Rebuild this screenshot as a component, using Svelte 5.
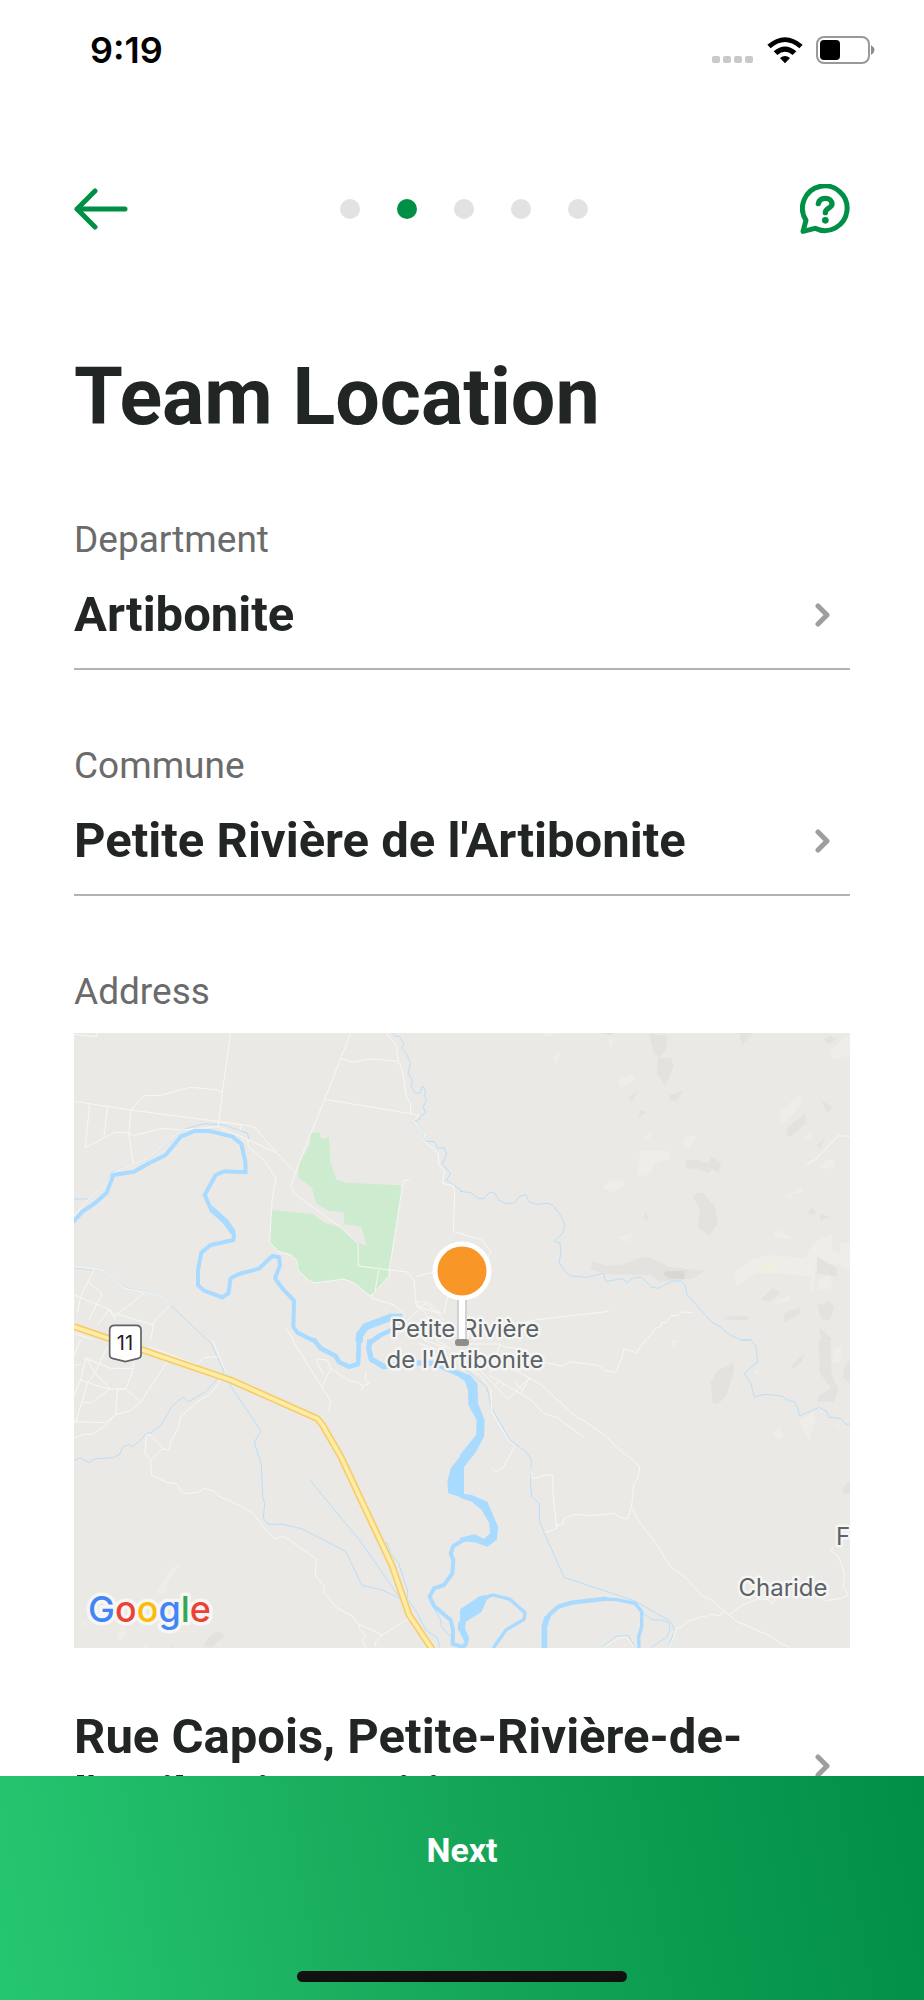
<script>
  export let title = "Team Location";
  export let steps = 5;
  export let currentStep = 1;
  export let fields = [
    { id: "department", label: "Department", value: "Artibonite" },
    { id: "commune", label: "Commune", value: "Petite Rivière de l'Artibonite" }
  ];
  export let address = "Rue Capois, Petite-Rivière-de-l'Artibonite, Haiti";

  // Map tiles, drawn at three units per pixel
  const tiles = [
    {
      x: 0,
      y: -9,
      parks: [
        "M711 309L737 307L741 328L765 321L769 395L787 448L815 458L980 466L985 480L946 720L946 737L905 785L885 795L845 762L810 747L725 759L705 752L668 717L668 690L650 673L612 664L587 636L592 540L715 552L755 580L800 592L852 638L878 647L862 590L811 582L809 546L765 542L727 520L713 472L672 443L675 400L708 345Z"
      ],
      light: [],
      dark: [],
      roads: [
        "M0 14L67 20L68 9M470 9L445 187L433 290",
        "M0 214L170 240L385 268L530 288L545 295L605 365L664 427",
        "M170 240L212 197L260 196L350 172L430 179L445 187M170 240L165 315L178 400",
        "M47 222L34 353L122 307L160 308L178 316L270 295L320 300M101 230L89 325",
        "M0 560L40 510L95 465L120 425L220 388L325 300L430 290L525 330L605 368M498 302L502 288",
        "M522 330L522 350L565 385L606 443L594 512L587 636L612 664L650 675L668 692L672 720L705 752L725 759L810 747L845 762L895 805L960 825L990 850",
        "M830 9L800 85L752 208L708 315L675 400L650 470L660 490L755 560L800 592L852 640L853 708L946 720L1000 726L1020 750L1027 830L1100 850",
        "M800 85L835 97L890 87L973 94M752 208L1010 251L1035 258M935 9L967 45L973 94L985 120L997 200L1010 220L1010 251",
        "M1035 258L1020 272L1052 310L1050 333L1093 370L1095 405L1112 425L1105 460L1138 467L1142 485L1138 605L1170 612",
        "M1007 449L990 452L985 470L946 720L946 737L890 800M914 720L903 785",
        "M1027 740L1060 730L1090 728M1110 850L1120 800M1000 870L1055 820L1110 870M1030 820L1070 870M1060 815L1100 850M1025 815L1060 817",
        "M0 710L60 717L90 722L155 775L260 797L290 825M62 717L42 755L85 792L68 822L45 870M42 755L20 800L10 850M0 795L110 840L120 860L210 790M70 885L105 840L125 870M120 850L240 885M290 825L240 875L230 930M0 910L60 930M635 895L660 930"
      ],
      streams: [
        "M955 9L965 20L975 18L990 42L983 55L997 70L1010 100L1002 130L1015 150L1012 170L1022 188L1038 190L1045 168L1055 182L1050 200L1058 210L1048 230L1055 250L1042 255L1035 270L1022 272L1050 305L1052 333L1080 335L1092 355L1110 352L1118 372L1105 402L1130 430L1118 450L1170 487",
        "M0 507L45 507L95 465L115 425L220 390L330 298L390 281L450 285L520 310L525 328",
        "M0 714L90 722L155 773L260 797L400 930"
      ],
      rivers: [
        { d: "M-6 580L25 545L60 522L98 488L118 435L180 425L225 400L275 375L320 320L365 302L410 304L475 320L502 342L514 395L515 427L450 424L425 435L392 495L410 535L455 575L480 612L478 630L410 645L382 668L372 720L372 765L390 782L445 802L463 790L470 745L495 732L555 716L595 678L615 682L618 705L603 745L625 775L660 812L658 890L670 908L725 935", w: 12 },
        { d: "M410 535L455 575L478 608", w: 18 },
        { d: "M855 938L857 915L875 890L950 862L985 862", w: 22 },
        { d: "M890 936L920 915L985 885", w: 14 }
      ]
    },
    {
      x: 1158,
      y: -9,
      parks: [],
      light: [
        "M252 9L300 9L255 20ZM445 28L468 22L452 55ZM278 85L298 60L303 75L287 102Z",
        "M472 152L518 130L525 150L490 173L475 165ZM552 320L575 305L567 330ZM663 345L680 322L713 315L685 357Z",
        "M540 363L625 363L635 385L585 402L568 433L532 440ZM428 475L450 450L485 448L498 464L462 487Z",
        "M958 245L1018 195L1028 215L980 275L960 277ZM1110 60L1170 10L1170 75L1115 90ZM1028 325L1058 305L1055 335ZM1075 415L1103 388L1125 392L1120 416Z",
        "M980 495L1022 470L1032 488L1000 490L988 510ZM940 610L958 600L1003 627L950 623ZM473 622L520 610L505 637Z",
        "M822 725L870 690L930 675L1035 685L1060 640L1115 610L1118 665L1140 670L1142 640L1170 637L1170 720L1130 700L1065 715L1060 790L1050 770L1055 740L1000 735L960 730L890 730L830 768Z",
        "M1075 750L1110 735L1117 775L1075 780ZM943 815L990 795L990 815L950 823Z"
      ],
      dark: [
        "M430 9L460 9L450 18ZM568 12L622 18L617 62L597 84L580 65ZM594 85L632 84L641 108L617 168L590 128ZM505 200L532 185L517 213ZM630 195L670 182L650 213L628 210ZM540 240L562 245L533 265Z",
        "M838 9L882 10L846 43ZM1090 28L1110 17L1130 28L1107 43ZM1080 208L1115 232L1105 252ZM980 295L1036 250L1037 280L995 318L982 317ZM1070 345L1095 325L1080 355Z",
        "M677 390L715 389L743 400L757 379L783 400L776 430L757 418L743 428L710 415L678 416ZM700 500L712 488L730 489L765 530L773 580L748 617L713 590L720 540ZM550 565L557 545L567 571Z",
        "M398 695L440 708L490 703L545 682L575 684L625 710L733 724L700 745L600 755L570 735L440 733L392 720Z",
        "M787 868L805 858L865 858L865 871ZM903 808L938 775L962 787L925 817ZM972 850L1020 832L1022 850L975 877ZM1040 555L1055 533L1070 548ZM1080 550L1112 562L1080 571ZM1070 825L1110 813L1122 835L1110 870L1085 868ZM1072 680L1130 715L1130 740L1070 730ZM1075 890L1120 930L1085 930Z"
      ],
      roads: [
        "M1040 403L1067 388L1135 317L1170 319",
        "M0 612L62 627L93 665L80 690M130 890L230 869L447 844M558 930L590 893L605 887L605 877L620 877L632 857L652 857L665 846L698 848"
      ],
      streams: [
        "M0 484L32 488L55 505L70 506L90 487L102 487L117 510L137 520L162 520L178 500L197 494L207 515L230 523L265 520L280 527L302 557L315 585L308 610L283 633L300 640L303 670L297 697L315 725L333 738L380 742L430 730L438 755L485 746L503 757L520 744L543 741L575 771L595 775L635 754L662 752L677 768L680 792L755 876L780 890L810 915L845 930L872 930"
      ],
      rivers: []
    },
    {
      x: 0,
      y: 921,
      parks: [],
      light: [
        "M245 755L280 700L310 672L315 680L285 720L270 765ZM125 885L145 860L162 880L140 902ZM15 860L30 840L33 855ZM205 922L215 908L222 922Z"
      ],
      dark: ["M388 922L400 895L430 873L453 885L415 922ZM283 922L295 915L300 922Z"],
      roads: [
        "M0 293L30 283L52 283L95 257L125 224L170 212L200 186L280 66M0 245L95 248L125 224L130 148L155 147L200 186M108 147L155 147L175 95L180 66M0 165L20 120L35 55L110 85L180 85M20 120L80 140L108 147L50 190L30 187M5 250L40 130L65 95L100 20M108 147L60 95L35 50M0 75L20 75M20 0L0 45M228 22L370 75L390 53L430 50",
        "M415 0L455 95L430 135L405 165L370 185L320 230L313 265L290 305L285 330L267 327L230 285L217 285L213 340L230 360L267 327M230 360L233 405L280 428L308 431L327 461L372 457L390 445L415 451L437 470L505 500L540 523L570 563L605 597L628 588L727 657L723 705L750 740L750 757L790 805L833 827L855 853L925 885L1005 835M855 853L855 865L875 885L865 900L875 922M925 885L905 905L902 922",
        "M655 0L770 183L765 215M745 140L770 85L760 60L730 57L728 68L750 105M770 85L825 122L845 125L868 138L887 131L873 120L876 95M868 138L862 152M1035 10L1080 25M1050 0L1120 25M1085 0L1130 25"
      ],
      streams: [
        "M0 362L20 353L45 368L60 357L118 353L137 343L145 322L165 313L175 320L195 305L217 281L230 278L260 257L295 197L328 171L343 186L395 155L450 95",
        "M400 0L412 10L450 95L470 138L561 273L541 306L562 375L566 470L572 490L568 535L582 553L628 553L685 567L815 634L864 736L928 751L985 780",
        "M706 418L860 605L975 770M930 607L940 610L950 640L974 670L1000 750L1000 775L1030 820L1055 870L1090 893L1097 922M1080 805L1100 840L1102 860L1130 890"
      ],
      rivers: [
        { d: "M718 -3L740 25L785 48L795 66L825 80L852 72L855 0", w: 14 },
        { d: "M888 -2L884 25L892 58L930 80L1000 68L1080 70L1170 108", w: 16 },
        { d: "M1172 598L1138 618L1130 640L1138 660L1135 700L1110 735L1080 745L1067 770L1080 798L1130 840L1137 870L1136 912L1172 922", w: 12 }
      ],
      water: ["M1170 335L1130 385L1120 425L1123 460L1170 475Z", "M1170 825L1152 850L1152 870L1170 885Z"]
    },
    {
      x: 1158,
      y: 921,
      parks: [],
      light: [
        "M632 0L658 0L638 22ZM880 97L900 82L892 103ZM1018 240L1062 215L1068 235L1045 303ZM940 280L960 262L972 288L952 298ZM1125 265L1133 248L1140 265ZM1120 30L1145 20L1140 68L1120 70Z"
      ],
      dark: [
        "M752 125L775 90L820 68L822 90L800 165L775 192L758 190ZM995 75L1035 38L1025 65L1000 87ZM1075 0L1110 0L1115 100L1135 150L1122 186L1072 185L1073 170L1112 145L1080 100ZM1170 60L1150 85L1150 115L1170 130ZM1170 422L1148 445L1150 462L1170 462Z"
      ],
      roads: [
        "M0 12L120 12L130 20L200 30M120 12L90 100M558 0L528 38L492 26L487 50L468 97L433 92L418 77L330 65L305 78L255 67",
        "M0 72L60 105L93 150L95 215L145 300L165 318L128 385L107 395L93 380",
        "M50 80L145 178L210 112M90 107L210 178L250 220L290 232L372 292M165 90L240 132L350 232L380 247L440 290L470 322L515 357L540 382L532 418L521 432L515 500L502 537L483 532L463 520L390 527L345 523L310 537L310 550L290 557L288 567L255 578M163 123L175 140L187 148M183 160L208 115M108 133L120 118M122 145L133 130",
        "M213 387L217 416L265 404L279 406L278 450L290 565M515 500L537 545L590 612L615 655L632 680L683 718L723 765L755 781L828 843L935 890L960 910L990 922",
        "M647 867L668 858L688 842L733 828L740 835L748 822L780 827L793 815M808 824L845 795L893 777L925 779L935 790L945 780M1090 778L1097 782L1145 775L1165 765L1150 742L1153 700L1135 648L1115 635L1118 620M647 867L640 895L625 922M430 922L480 893L500 891L523 922"
      ],
      streams: [
        "M0 75L80 140L95 205L150 300L200 337L214 360L212 440L215 470L238 491L238 545L312 712L525 783L630 843L645 870L625 922",
        "M550 820L578 840L607 840L628 850L630 870L620 892L575 922M425 922L470 888L505 887L525 922",
        "M845 0L872 0L888 18L893 65L852 100L873 130L883 171L915 163L965 168L988 183L1003 185L1012 203L1019 228L1078 202L1098 213L1107 232L1143 236L1158 253L1170 252"
      ],
      rivers: [
        { d: "M100 924L138 870L192 838L195 818L150 778L100 765L60 775", w: 10 },
        { d: "M253 924L253 860L267 825L295 800L335 788L440 776", w: 13 },
        { d: "M253 924L253 860L262 830", w: 17 },
        { d: "M430 777L470 779L525 790L545 815L545 860L536 890L537 924", w: 10 }
      ],
      water: [
        "M0 96L30 105L52 130L54 190L74 240L72 290L48 335L0 397L0 345L48 285L50 240L25 195L24 150L14 122L0 115Z",
        "M0 460L35 465L82 485L115 562L110 600L82 620L45 607L0 604L0 593L45 583L72 597L90 580L88 550L65 510L35 485L0 473Z",
        "M0 808L60 768L105 762L80 780L65 815L40 832L18 845L15 865L28 895L20 922L0 922L14 905L0 880Z"
      ]
    }
  ];

  const highway = "M0 881L470 1041L730 1157L745 1175L800 1270L955 1600L1005 1745L1075 1850";
</script>

<div class="screen">
  <div class="status-bar">
    <span class="time">9:19</span>
    <div class="indicators">
      <svg width="42" height="26" viewBox="0 0 42 26" aria-hidden="true">
        {#each [0, 11, 22, 33] as x}
          <rect {x} y="19" width="8" height="7" rx="2" fill="#c9c9c9" />
        {/each}
      </svg>
      <svg class="wifi" width="36" height="27" viewBox="0 0 108 81" aria-hidden="true">
        <path d="M1 23Q54-22 107 23L97 34Q54-4 11 34Z" />
        <path d="M20 43Q54 14 88 43L77 54Q54 34 31 54Z" />
        <path d="M39 63Q54 51 69 63L54 79Z" />
      </svg>
      <svg width="60" height="28" viewBox="0 0 60 28" aria-hidden="true">
        <rect x="1" y="1" width="52" height="26" rx="7" fill="none" stroke="#999999" stroke-width="2" />
        <rect x="4" y="4" width="20" height="20" rx="4" />
        <path d="M55 9Q62 14 55 19Z" fill="#8c8c8c" />
      </svg>
    </div>
  </div>

  <nav class="top-nav">
    <button class="icon-button" aria-label="Back">
      <svg width="54" height="42" viewBox="0 0 54 42">
        <path d="M51 21H3M21 3L3 21L21 39" />
      </svg>
    </button>
    <div class="steps">
      {#each Array(steps) as _, index}
        <span class="step" class:active={index === currentStep}></span>
      {/each}
    </div>
    <button class="icon-button" aria-label="Help">
      <svg width="50" height="50" viewBox="0 0 150 150">
        <path class="bubble" d="M18 109A67 67 0 1 1 45 133L9 142Z" />
        <path class="question" d="M55 59C57 47 65 43 76 43C88 43 96 50 96 60C96 73 76 71 76 86" />
        <circle cx="76" cy="109" r="10" />
      </svg>
    </button>
  </nav>

  <main>
    <h1>{title}</h1>

    {#each fields as field}
      <div class="field">
        <span class="label" id="{field.id}-label">{field.label}</span>
        <button class="value underlined" aria-labelledby="{field.id}-label {field.id}-value">
          <span id="{field.id}-value">{field.value}</span>
          <svg class="chevron" width="16" height="24" viewBox="0 0 16 24">
            <path d="M3 3L12 12L3 21" />
          </svg>
        </button>
      </div>
    {/each}

    <div class="address">
      <span class="label" id="address-label">Address</span>
      <svg class="map" viewBox="0 0 776 615" role="img" aria-label="Map of Petite Rivière de l'Artibonite">
        <g transform="scale(0.33333)">
          {#each tiles as tile}
            <g transform="translate({tile.x} {tile.y})">
              {#each tile.light as d}<path class="light" {d} />{/each}
              {#each tile.dark as d}<path class="dark" {d} />{/each}
              {#each tile.parks as d}<path class="park" {d} />{/each}
              {#each tile.streams as d}<path class="stream" {d} />{/each}
              {#each tile.roads as d}<path class="road" {d} />{/each}
              {#each tile.rivers as river}<path class="river" d={river.d} stroke-width={river.w} />{/each}
              {#each tile.water ?? [] as d}<path class="water" {d} />{/each}
            </g>
          {/each}
          <path class="valley" d="M1775 715L1833 714L1830 739L1785 736L1768 724Z" />
          <path class="peak" d="M2058 702L2085 687L2115 700L2098 713L2065 712Z" />
          <path class="highway" d={highway} />
          <path class="highway-core" d={highway} />
          <path class="shield" d="M122 877H187Q201 877 201 891V966Q201 974 193 976L154 986L115 976Q107 974 107 966V891Q107 877 122 877Z" />
        </g>

        <text class="route" x="51" y="317">11</text>
        <text class="place" x="391" y="304">Petite Rivière</text>
        <text class="place" x="391" y="335">de l'Artibonite</text>
        <text class="place" x="709" y="563">Charide</text>
        <text class="place start" x="762" y="512">F</text>
        <text class="google" x="14" y="589"><tspan fill="#4285f4">G</tspan><tspan fill="#ea4335">o</tspan><tspan fill="#fbbc05">o</tspan><tspan fill="#4285f4">g</tspan><tspan fill="#34a853">l</tspan><tspan fill="#ea4335">e</tspan></text>

        <rect x="383" y="262" width="10" height="44" fill="#d2d2d2" />
        <rect x="385" y="262" width="6" height="44" fill="#ffffff" />
        <rect x="381" y="306" width="14" height="7" rx="3" fill="#8e8e8c" />
        <circle cx="388" cy="238" r="27" fill="#f89728" stroke="#ffffff" stroke-width="5" />
      </svg>
      <button class="value" aria-labelledby="address-label address-value">
        <span id="address-value">{address}</span>
        <svg class="chevron" width="16" height="24" viewBox="0 0 16 24">
          <path d="M3 3L12 12L3 21" />
        </svg>
      </button>
    </div>
  </main>

  <footer>
    <button class="next">Next</button>
    <div class="home-indicator"></div>
  </footer>
</div>

<style>
  :global(body) {
    background: #ffffff;
  }

  .screen {
    min-height: 100vh;
    box-sizing: border-box;
    padding-bottom: 160px;
    font-family: Roboto, sans-serif;
    color: #212624;
  }

  button {
    padding: 0;
    border: 0;
    background: none;
    color: inherit;
    font-family: inherit;
    cursor: pointer;
  }

  .status-bar {
    display: flex;
    justify-content: space-between;
    align-items: center;
    height: 100px;
    padding: 0 48px 0 90px;
    color: #000000;
  }

  .time {
    font-family: Inter, sans-serif;
    font-size: 36px;
    font-weight: 600;
  }

  .indicators {
    display: flex;
    align-items: center;
    gap: 13px;
  }

  /* Navigation */
  .top-nav {
    display: flex;
    justify-content: space-between;
    align-items: center;
    padding: 84px 74px 0;
  }

  .icon-button {
    display: flex;
  }

  .icon-button path {
    fill: none;
    stroke: #009045;
    stroke-width: 5;
    stroke-linecap: round;
    stroke-linejoin: round;
  }

  .icon-button .bubble {
    stroke-width: 15;
  }

  .icon-button .question {
    stroke-width: 16;
  }

  .icon-button circle {
    fill: #009045;
  }

  .steps {
    display: flex;
    gap: 37px;
  }

  .step {
    width: 20px;
    height: 20px;
    border-radius: 50%;
    background: #e2e2e2;
  }

  .step.active {
    background: #009045;
  }

  /* Form */
  main {
    padding: 115px 74px 0;
  }

  h1 {
    margin: 0 0 73px;
    font-size: 79px;
    line-height: 96px;
    font-weight: 700;
  }

  .field {
    margin-bottom: 74px;
  }

  .label {
    display: block;
    font-size: 37px;
    line-height: 44px;
    color: #6b6b6b;
  }

  .value {
    display: flex;
    justify-content: space-between;
    align-items: center;
    gap: 48px;
    width: 100%;
    padding-right: 19px;
    font-size: 49px;
    line-height: 58px;
    font-weight: 700;
    text-align: left;
  }

  .underlined {
    margin-top: 24px;
    padding-bottom: 24px;
    border-bottom: 2px solid #b3b3b3;
  }

  .chevron {
    flex: none;
  }

  .chevron path {
    fill: none;
    stroke: #9e9e9e;
    stroke-width: 5;
    stroke-linecap: round;
    stroke-linejoin: round;
  }

  /* Map */
  .map {
    display: block;
    width: 100%;
    height: auto;
    margin: 19px 0 60px;
    background: #eae9e5;
  }

  .light {
    fill: #eeede8;
  }

  .dark {
    fill: #e3e2de;
  }

  .valley {
    fill: #d8d7d3;
  }

  .peak {
    fill: #f2efe0;
  }

  .park {
    fill: #cdebcf;
  }

  .water {
    fill: #a9daff;
  }

  .stream,
  .road,
  .river,
  .highway,
  .highway-core {
    fill: none;
    stroke-linejoin: round;
  }

  .stream {
    stroke: #b8defa;
    stroke-width: 3;
  }

  .road {
    stroke: #f7f7f5;
    stroke-width: 3;
  }

  .river {
    stroke: #a9daff;
  }

  .highway {
    stroke: #f6cd6c;
    stroke-width: 21;
  }

  .highway-core {
    stroke: #ffeda6;
    stroke-width: 11;
  }

  .shield {
    fill: #ffffff;
    stroke: #5f6266;
    stroke-width: 5;
  }

  .place,
  .route {
    font-family: Inter, sans-serif;
    font-size: 24px;
    text-anchor: middle;
    fill: #5d6268;
  }

  .place {
    stroke: #f5f5f3;
    stroke-width: 5px;
    stroke-linejoin: round;
    paint-order: stroke;
  }

  .start {
    text-anchor: start;
  }

  .route {
    font-size: 20px;
    fill: #202124;
  }

  .google {
    font-family: Inter, sans-serif;
    font-size: 36px;
    font-weight: 500;
    stroke: #f7f6f4;
    stroke-width: 7px;
    stroke-linejoin: round;
    paint-order: stroke;
  }

  /* Footer */
  footer {
    position: fixed;
    right: 0;
    bottom: 0;
    left: 0;
    display: flex;
    flex-direction: column;
    justify-content: space-between;
    align-items: center;
    box-sizing: border-box;
    height: 224px;
    padding-bottom: 18px;
    background: linear-gradient(80deg, #26c771 0%, #15a659 50%, #008f45 100%);
  }

  .next {
    width: 100%;
    padding: 54px 0;
    font-size: 34px;
    line-height: 40px;
    font-weight: 700;
    color: #ffffff;
  }

  .home-indicator {
    width: 330px;
    height: 11px;
    border-radius: 6px;
    background: #111111;
  }
</style>
